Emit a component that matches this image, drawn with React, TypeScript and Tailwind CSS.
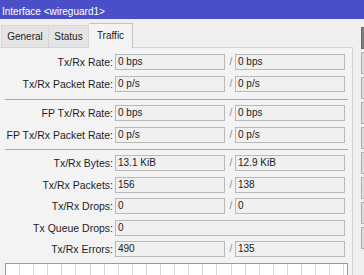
import React from "react";

type RowProps = {
  label: string;
  a: string;
  b?: string;
  h: string;
  className?: string;
};

const Box = ({ value, wide }: { value: string; wide?: boolean }) => (
  <div
    className={`${wide ? "w-[230px]" : "w-[110px]"} h-[16px] border border-[#b9b9b9] bg-[#f0f0f0] pl-[2px] text-[10px] leading-[14px] text-[#1b1b1b] whitespace-nowrap overflow-hidden`}
  >
    {value}
  </div>
);

const Row = ({ label, a, b, h, className = "" }: RowProps) => (
  <div className={`flex items-center ${h} ${className}`}>
    <div className="w-[113px] text-right text-[10.5px] leading-[14px] text-[#1e1e1e] whitespace-nowrap">
      {label}
    </div>
    <div className="ml-[2px] flex items-center">
      {b === undefined ? (
        <Box value={a} wide />
      ) : (
        <>
          <Box value={a} />
          <div className="w-[10px] pl-[2px] text-center text-[10px] leading-[14px] text-[#8a8a8a]">/</div>
          <Box value={b} />
        </>
      )}
    </div>
  </div>
);

const Separator = ({ className = "" }: { className?: string }) => (
  <div className={`ml-[5px] w-[343px] h-px bg-[#ababab] ${className}`} />
);

const Chart = () => {
  const lines = Array.from({ length: 24 }, (_, k) => 13 + k * 14.1);
  return (
    <div className="mt-[3px] ml-[5px] w-[343px] h-[20px] bg-white border-t border-l border-r border-[#9a9a9a]">
      <svg width="341" height="20" className="block">
        {lines.map((x) => (
          <line key={x} x1={Math.round(x) + 0.5} x2={Math.round(x) + 0.5} y1="0" y2="20" stroke="#d6d6d6" strokeWidth="1" />
        ))}
      </svg>
    </div>
  );
};

// side buttons (OK, Cancel, Apply, ...) – only their left edge shows in the window
const buttons = ["ok", "cancel", "apply", "disable", "comment", "copy", "remove", "torch", "wg"];

export default function App() {
  return (
    <div className="w-[364px] h-[275px] overflow-hidden bg-[#f0f0f0] font-['Liberation_Sans',Arial,sans-serif] flex flex-col">
      <div className="h-[19px] shrink-0 bg-[#4b4fc7] pl-[2px] pt-[5px] text-[10px] leading-[13px] text-white whitespace-nowrap">
        Interface &lt;wireguard1&gt;
      </div>
      <div className="flex flex-1 min-h-0">
        <div className="w-[353px] shrink-0 flex flex-col">
          <div className="h-[28px] shrink-0 flex items-end pl-[1px] text-[10px] text-[#1e1e1e]">
            <div className="w-[48px] h-[22px] flex items-center justify-center bg-[#e4e4e4] border border-b-0 border-[#d6d6d6]">
              General
            </div>
            <div className="w-[40px] h-[22px] flex items-center justify-center bg-[#e4e4e4] border border-l-0 border-b-0 border-[#d6d6d6]">
              Status
            </div>
            <div className="relative z-10 -mb-px w-[44px] h-[25px] flex items-center justify-center pb-[2px] bg-[#f3f3f3] border-t border-r border-[#c4c4c4]">
              Traffic
            </div>
          </div>
          <div className="flex-1 min-h-0 overflow-hidden border-t border-r border-[#d4d4d4] bg-[#f3f3f3] pt-[3px]">
            <Row label="Tx/Rx Rate:" a="0 bps" b="0 bps" h="h-[22px]" />
            <Row label="Tx/Rx Packet Rate:" a="0 p/s" b="0 p/s" h="h-[22px]" />
            <Separator className="mt-[4px]" />
            <Row label="FP Tx/Rx Rate:" a="0 bps" b="0 bps" h="h-[22px]" className="mt-[2px]" />
            <Row label="FP Tx/Rx Packet Rate:" a="0 p/s" b="0 p/s" h="h-[21px]" />
            <Separator className="mt-[4px]" />
            <Row label="Tx/Rx Bytes:" a="13.1 KiB" b="12.9 KiB" h="h-[22px]" className="mt-[2px]" />
            <Row label="Tx/Rx Packets:" a="156" b="138" h="h-[21px]" />
            <Row label="Tx/Rx Drops:" a="0" b="0" h="h-[22px]" />
            <Row label="Tx Queue Drops:" a="0" h="h-[21px]" />
            <Row label="Tx/Rx Errors:" a="490" b="135" h="h-[22px]" />
            <Chart />
          </div>
        </div>
        <div className="ml-[8px] pt-[8px] flex flex-col gap-[3px] w-[80px] shrink-0">
          {buttons.map((name, i) => (
            <div
              key={name}
              className={`h-[22px] shrink-0 border ${
                i === 0 ? "border-[#6b6b6b] bg-[#7b7b7b]" : "border-[#adadad] bg-[#dcdcdc]"
              }`}
            />
          ))}
        </div>
      </div>
    </div>
  );
}
